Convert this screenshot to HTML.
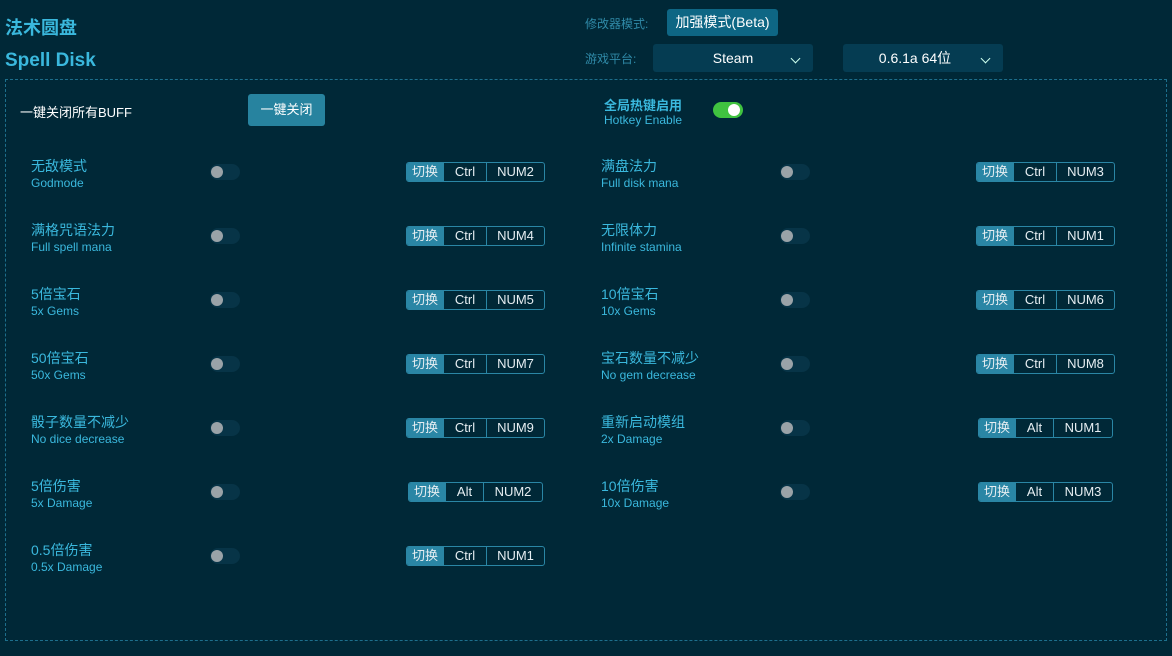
<!DOCTYPE html>
<html><head><meta charset="utf-8"><style>
*{margin:0;padding:0;box-sizing:border-box}
body{width:1172px;height:656px;background:#002837;font-family:"Liberation Sans","Noto Sans CJK SC",sans-serif;position:relative;overflow:hidden}
.a{position:absolute;white-space:nowrap}
.t1{left:5px;top:14px;font-size:18px;font-weight:bold;color:#3ab8dd}
.t2{left:5px;top:50px;font-size:19px;font-weight:bold;color:#3ab8dd}
.lbl{font-size:12px;color:#2f8aa8}
.box{position:absolute;border:1px dashed #1d6f8c;left:5px;top:79px;width:1162px;height:562px}
.btn{background:#27839f;color:#fff;border-radius:3px;font-size:13px;text-align:center}
.sel{background:#053c52;color:#fff;border-radius:3px;font-size:14px;text-align:center;line-height:28px}
.chev{position:absolute;width:7px;height:7px;border-right:1.5px solid #cfe;border-bottom:1.5px solid #cfe;transform:rotate(45deg)}
.n{font-size:14px;color:#3ab8dd}
.s{font-size:12px;color:#3ab8dd}
.tg{position:absolute;width:30px;height:16px;border-radius:8px;background:#073447}
.tg:after{content:"";position:absolute;left:1px;top:2px;width:12px;height:12px;border-radius:6px;background:#9aa3a8}
.tg.on:after{display:none}
.hk{position:absolute;height:20px;border:1px solid #2a86a5;border-radius:3px;display:flex;font-size:13px;color:#e6eef2;line-height:18px;overflow:hidden}
.hk span{text-align:center;border-left:1px solid #2a86a5}
.hk span:first-child{background:#2a86a5;border:none}
</style></head><body>
<div class="a t1">法术圆盘</div>
<div class="a t2">Spell Disk</div>
<div class="a lbl" style="left:585px;top:15px">修改器模式:</div>
<div class="a btn" style="left:667px;top:9px;width:111px;height:27px;line-height:27px;background:#0e6684;font-size:14px">加强模式(Beta)</div>
<div class="a lbl" style="left:585px;top:50px">游戏平台:</div>
<div class="a sel" style="left:653px;top:44px;width:160px;height:28px">Steam</div>
<div class="chev" style="left:792px;top:55px"></div>
<div class="a sel" style="left:843px;top:44px;width:160px;height:28px;padding-right:16px">0.6.1a 64位</div>
<div class="chev" style="left:982px;top:55px"></div>
<div class="box"></div>
<div class="a" style="left:20px;top:102px;font-size:13px;color:#fff">一键关闭所有BUFF</div>
<div class="a btn" style="left:248px;top:94px;width:77px;height:32px;line-height:32px">一键关闭</div>
<div class="a" style="left:604px;top:95px;font-size:13px;font-weight:bold;color:#3ab8dd">全局热键启用</div>
<div class="a s" style="left:604px;top:113px">Hotkey Enable</div>
<div class="tg on" style="left:713px;top:102px;background:#40c340"></div>
<div class="a" style="left:728px;top:104px;width:12px;height:12px;border-radius:6px;background:#fff"></div>
<div id="rows"></div>
<script>
var L=[["无敌模式","Godmode","Ctrl","NUM2"],["满格咒语法力","Full spell mana","Ctrl","NUM4"],["5倍宝石","5x Gems","Ctrl","NUM5"],["50倍宝石","50x Gems","Ctrl","NUM7"],["骰子数量不减少","No dice decrease","Ctrl","NUM9"],["5倍伤害","5x Damage","Alt","NUM2"],["0.5倍伤害","0.5x Damage","Ctrl","NUM1"]];
var R=[["满盘法力","Full disk mana","Ctrl","NUM3"],["无限体力","Infinite stamina","Ctrl","NUM1"],["10倍宝石","10x Gems","Ctrl","NUM6"],["宝石数量不减少","No gem decrease","Ctrl","NUM8"],["重新启动模组","2x Damage","Alt","NUM1"],["10倍伤害","10x Damage","Alt","NUM3"]];
var h="";
function add(arr,x,tx,hx){arr.forEach(function(r,i){var y=156+i*64;
h+='<div class="a n" style="left:'+x+'px;top:'+y+'px">'+r[0]+'</div>';
h+='<div class="a s" style="left:'+x+'px;top:'+(y+20)+'px">'+r[1]+'</div>';
h+='<div class="tg" style="left:'+tx+'px;top:'+(y+8)+'px"></div>';
var alt=r[2]=="Alt";var hxx=hx+(alt?2:0);
h+='<div class="hk" style="left:'+hxx+'px;top:'+(y+6)+'px;width:'+(alt?135:139)+'px"><span style="width:36px">切换</span><span style="width:'+(alt?38:43)+'px">'+r[2]+'</span><span style="flex:1">'+r[3]+'</span></div>';});}
add(L,31,210,406);add(R,601,780,976);
document.getElementById("rows").innerHTML=h;
</script>
</body></html>
